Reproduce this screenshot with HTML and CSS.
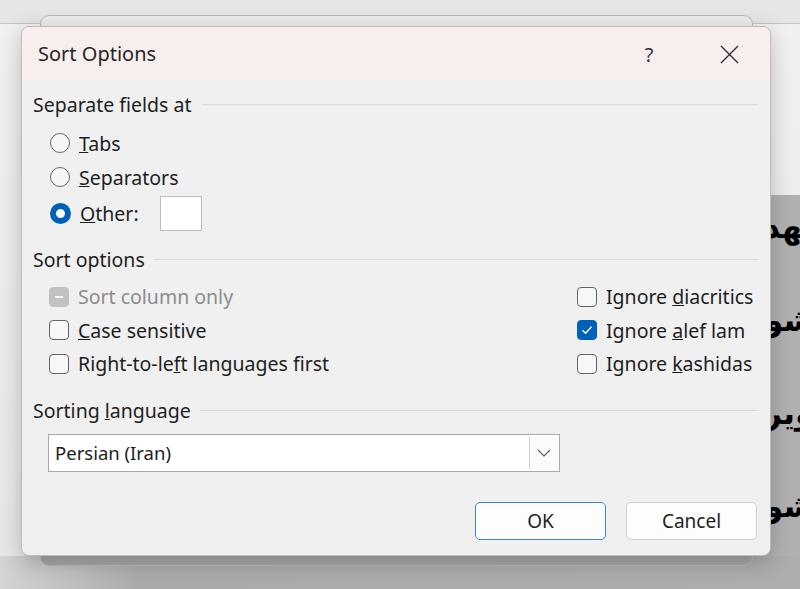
FILE: index.html
```html
<!DOCTYPE html>
<html lang="en">
<head>
    <meta charset="UTF-8">
    <meta name="viewport" content="width=device-width, initial-scale=1.0">
    <title>Sort Options</title>
    <link rel="stylesheet" href="styles.css">
</head>
<body>

<div class="desktop">
    <div class="topbar"></div>

    <!-- dokumen di belakang dialog -->
    <div class="doc">
        <div class="doc-lines">
            <div class="doc-line">مشهد</div>
            <div class="doc-line">نوشو</div>
            <div class="doc-line">تصویر</div>
            <div class="doc-line">نوشو</div>
        </div>
    </div>
    <div class="bottom-shade"></div>

    <div class="parent-window"></div>

    <div class="dialog">
        <div class="titlebar">
            <span class="title">Sort Options</span>
            <div class="title-buttons">
                <span class="title-btn help">?</span>
                <span class="title-btn">
                    <svg width="19" height="19" viewBox="0 0 19 19"><path d="M1 1 L18 18 M18 1 L1 18" stroke="#2b2b2b" stroke-width="1.3" fill="none"/></svg>
                </span>
            </div>
        </div>

        <div class="dialog-body">
            <div class="group-header">
                <span>Separate fields at</span>
                <div class="group-line"></div>
            </div>
            <div class="radio-list">
                <div class="option-row">
                    <span class="radio"></span>
                    <span class="label"><u>T</u>abs</span>
                </div>
                <div class="option-row">
                    <span class="radio"></span>
                    <span class="label"><u>S</u>eparators</span>
                </div>
                <div class="option-row other-row">
                    <span class="radio checked"></span>
                    <span class="label"><u>O</u>ther:</span>
                    <span class="other-input"></span>
                </div>
            </div>

            <div class="group-header second">
                <span>Sort options</span>
                <div class="group-line"></div>
            </div>
            <div class="check-grid">
                <div class="option-row disabled">
                    <span class="checkbox gray"><span class="dash"></span></span>
                    <span class="label">Sort column only</span>
                </div>
                <div class="option-row">
                    <span class="checkbox"></span>
                    <span class="label">Ignore <u>d</u>iacritics</span>
                </div>
                <div class="option-row">
                    <span class="checkbox"></span>
                    <span class="label"><u>C</u>ase sensitive</span>
                </div>
                <div class="option-row">
                    <span class="checkbox checked">
                        <svg width="14" height="14" viewBox="0 0 14 14"><path d="M2.5 7.3 L5.6 10.2 L11.5 3.8" stroke="#ffffff" stroke-width="1.4" fill="none"/></svg>
                    </span>
                    <span class="label">Ignore <u>a</u>lef lam</span>
                </div>
                <div class="option-row">
                    <span class="checkbox"></span>
                    <span class="label">Right-to-le<u>f</u>t languages first</span>
                </div>
                <div class="option-row">
                    <span class="checkbox"></span>
                    <span class="label">Ignore <u>k</u>ashidas</span>
                </div>
            </div>

            <div class="group-header third">
                <span>Sorting <u>l</u>anguage</span>
                <div class="group-line"></div>
            </div>
            <div class="select-box">
                <span class="select-text">Persian (Iran)</span>
                <span class="select-arrow">
                    <svg width="14" height="8" viewBox="0 0 14 8"><path d="M1 1 L7 7 L13 1" stroke="#5a5a5a" stroke-width="1.1" fill="none"/></svg>
                </span>
            </div>

            <div class="button-row">
                <button class="dlg-btn ok-btn">OK</button>
                <button class="dlg-btn">Cancel</button>
            </div>
        </div>
    </div>
</div>

</body>
</html>
```

FILE: styles.css
```css
body {
    margin: 0;
    padding: 0;
    font-family: "Noto Sans", "Open Sans", sans-serif;
    background-color: #efefef;
    overflow: hidden;
}
.desktop {
    position: relative;
    width: 800px;
    height: 589px;
    overflow: hidden;
    background: linear-gradient(to bottom, #f1f1f1, #e6e6e6);
}
.topbar {
    height: 23px;
    background-color: #e5e5e5;
    border-bottom: 1px solid #c6c6c6;
}
.doc {
    position: absolute;
    left: 600px;
    top: 195px;
    right: 0;
    bottom: 0;
    background: linear-gradient(to right, #b8b8b8, #b0b0b0);
    overflow: hidden;
}
.doc-lines {
    margin-top: -14px;
    padding-left: 164px;
}
.doc-line {
    height: 93px;
    line-height: 93px;
    font-family: "DejaVu Sans", sans-serif;
    font-weight: bold;
    font-size: 31px;
    color: #000;
    white-space: nowrap;
}
.bottom-shade {
    position: absolute;
    left: 0;
    right: 0;
    top: 556px;
    bottom: 0;
    background: linear-gradient(to right, #d4d4d4, #aaaaaa 140px, #adadad);
}
.parent-window {
    position: absolute;
    left: 40px;
    top: 15px;
    width: 711px;
    height: 549px;
    border: 1px solid #b9b9b9;
    border-radius: 9px;
    background: linear-gradient(to bottom, #ececec 0, #ececec 530px, #a6a6a6 540px);
}
.dialog {
    position: absolute;
    left: 21px;
    top: 26px;
    width: 748px;
    height: 528px;
    border: 1px solid #bdbdbd;
    border-radius: 8px;
    background-color: #f0f0f0;
    box-shadow: 0 6px 22px rgba(0, 0, 0, 0.22);
    overflow: hidden;
}
.titlebar {
    height: 54px;
    background-color: #f8eeee;
    display: flex;
    align-items: center;
    justify-content: space-between;
    padding-left: 16px;
}
.title {
    font-size: 20px;
    color: #262626;
    margin-top: -2px;
}
.title-buttons {
    display: flex;
    gap: 20px;
    padding-right: 11px;
}
.title-btn {
    width: 60px;
    height: 40px;
    display: flex;
    align-items: center;
    justify-content: center;
}
.help {
    font-size: 20px;
    color: #333;
}
.dialog-body {
    padding: 11px 11px 0 11px;
    font-size: 19.5px;
    color: #1e1e1e;
}
.group-header {
    height: 24px;
    display: flex;
    align-items: center;
}
.group-header.second {
    margin-top: 15px;
}
.group-header.third {
    margin-top: 18px;
}
.group-line {
    flex: 1;
    height: 1px;
    background-color: #dadada;
    margin-left: 9px;
}
.radio-list {
    margin-top: 10px;
    margin-left: 17px;
}
.option-row {
    display: flex;
    align-items: center;
    height: 34px;
}
.other-row {
    height: 38px;
}
.radio {
    width: 18px;
    height: 18px;
    border: 1.5px solid #686868;
    border-radius: 50%;
    background-color: #f6f6f6;
    margin-right: 9px;
}
.radio.checked {
    width: 9px;
    height: 9px;
    border: 6px solid #005fb8;
    background-color: #fff;
}
.other-input {
    width: 40px;
    height: 33px;
    margin-left: 21px;
    background-color: #fff;
    border: 1px solid #bcbcbc;
}
.check-grid {
    display: grid;
    grid-template-columns: 528px auto;
    grid-auto-rows: 33.5px;
    margin-top: 9px;
    margin-left: 16px;
}
.check-grid .option-row {
    height: auto;
}
.checkbox {
    width: 18px;
    height: 18px;
    border: 1.5px solid #646464;
    border-radius: 4px;
    background-color: #f7f7f7;
    margin-right: 9px;
    display: flex;
    align-items: center;
    justify-content: center;
}
.checkbox.checked {
    background-color: #005fb8;
    border-color: #005fb8;
}
.checkbox.gray {
    background-color: #c2c2c2;
    border-color: #c2c2c2;
}
.dash {
    width: 8px;
    height: 2px;
    background-color: #f4f4f4;
}
.disabled .label {
    color: #8c8c8c;
}
.select-box {
    margin-top: 11px;
    margin-left: 15px;
    width: 510px;
    height: 36px;
    border: 1px solid #a8a8a8;
    background-color: #fff;
    display: flex;
    align-items: center;
    justify-content: space-between;
}
.select-text {
    padding-left: 6px;
    font-size: 18.5px;
}
.select-arrow {
    width: 28px;
    height: 32px;
    margin-right: 1px;
    border-left: 1px solid #d0d0d0;
    background-color: #fbfbfb;
    display: flex;
    align-items: center;
    justify-content: center;
}
.button-row {
    display: flex;
    justify-content: flex-end;
    gap: 20px;
    margin-top: 30px;
    padding-right: 2px;
}
.dlg-btn {
    width: 131px;
    height: 38px;
    font-family: "Noto Sans", "Open Sans", sans-serif;
    font-size: 19px;
    color: #1e1e1e;
    background-color: #fdfdfd;
    border: 1px solid #d0d0d0;
    border-radius: 5px;
}
.ok-btn {
    border: 1.5px solid #3a84d4;
}
```
